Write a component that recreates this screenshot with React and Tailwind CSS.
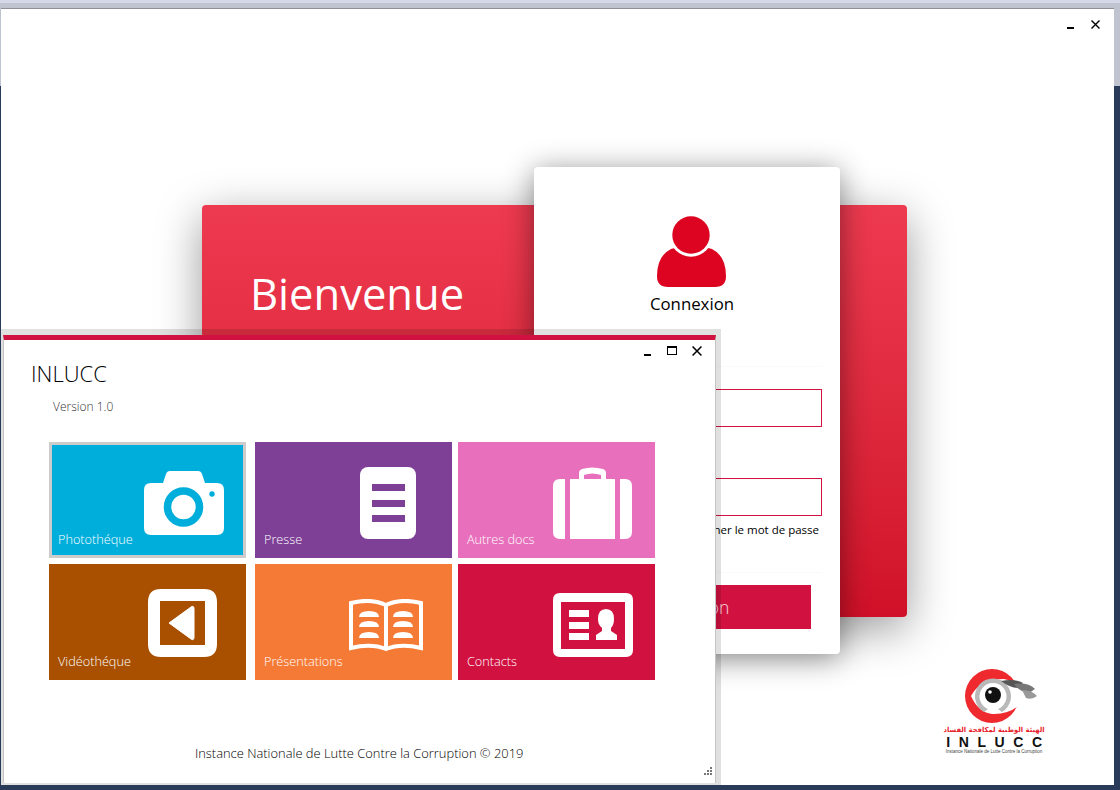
import React from 'react';

const MinIcon = () => <div className="w-[7px] h-[2px] bg-black" />;

const CloseIcon = ({ size = 9 }) => (
  <svg width={size} height={size} viewBox="0 0 9 9" className="block">
    <path d="M0.5 0.5 L8.5 8.5 M8.5 0.5 L0.5 8.5" stroke="#000" strokeWidth="1.4" fill="none" />
  </svg>
);

const CameraIcon = () => (
  <svg width="80" height="64" viewBox="0 0 80 64" className="mt-[29px] mr-[22px]">
    <path d="M7 12 H19 L22 3 Q23 0 26 0 H54 Q57 0 58 3 L61 12 H73 Q80 12 80 19 V57 Q80 64 73 64 H7 Q0 64 0 57 V19 Q0 12 7 12 Z" fill="#fff" />
    <circle cx="39.5" cy="36" r="16" fill="#fff" stroke="#00aedb" strokeWidth="7.5" />
    <circle cx="68" cy="23" r="2.7" fill="#00aedb" />
  </svg>
);

const PresseIcon = () => (
  <svg width="56" height="72" viewBox="0 0 56 72" className="mt-[25px] mr-[36px]">
    <rect width="56" height="72" rx="8" fill="#fff" />
    <rect x="12" y="17" width="33" height="7" fill="#7d4096" />
    <rect x="12" y="33" width="33" height="7" fill="#7d4096" />
    <rect x="12" y="48" width="33" height="7" fill="#7d4096" />
  </svg>
);

const BriefcaseIcon = () => (
  <svg width="79" height="72" viewBox="0 0 79 72" className="mt-[25px] mr-[23px]">
    <path d="M12 12 V72 H7 Q0 72 0 65 V19 Q0 12 7 12 Z" fill="#fff" />
    <path d="M67 12 V72 H72 Q79 72 79 65 V19 Q79 12 72 12 Z" fill="#fff" />
    <path d="M17 12 H26 V6 Q26 3 29 2 Q39 -1 50 2 Q53 3 53 6 V12 H62 V72 H17 Z M31 12 H48 V8 Q39 5 31 8 Z" fill="#fff" fillRule="evenodd" />
  </svg>
);

const VideoIcon = () => (
  <svg width="69" height="68" viewBox="0 0 69 68" className="mt-[25px] mr-[29px]">
    <path d="M13 0 H56 Q69 0 69 13 V55 Q69 68 56 68 H13 Q0 68 0 55 V13 Q0 0 13 0 Z M12 12 V56 H57 V12 Z" fill="#fff" fillRule="evenodd" />
    <path d="M21 34 L43 18 Q46 16 46 20 V48 Q46 52 43 50 Z" fill="#fff" stroke="#fff" strokeWidth="1" strokeLinejoin="round" />
  </svg>
);

const BookIcon = () => (
  <svg width="74" height="53" viewBox="0 0 74 53" className="mt-[35px] mr-[29px]">
    <path d="M2 4 Q22 -1 37 6 Q52 -1 72 4 V49 Q52 44 37 50 Q22 44 2 49 Z M37 6 V50" fill="none" stroke="#fff" strokeWidth="4" />
    <path d="M10 18 Q10 12 20 12 Q30 12 30 18 Z M10 28 Q10 22 20 22 Q30 22 30 28 Z M10 39 Q10 33 20 33 Q30 33 30 39 Z" fill="#fff" />
    <path d="M44 18 Q44 12 54 12 Q64 12 64 18 Z M44 28 Q44 22 54 22 Q64 22 64 28 Z M44 39 Q44 33 54 33 Q64 33 64 39 Z" fill="#fff" />
  </svg>
);

const ContactIcon = () => (
  <svg width="80" height="64" viewBox="0 0 80 64" className="mt-[29px] mr-[22px]">
    <path d="M7 0 H73 Q80 0 80 7 V57 Q80 64 73 64 H7 Q0 64 0 57 V7 Q0 0 7 0 Z M8 9 V56 H72 V9 Z" fill="#fff" fillRule="evenodd" />
    <rect x="16" y="17" width="20" height="7" fill="#fff" />
    <rect x="16" y="29" width="20" height="7" fill="#fff" />
    <rect x="16" y="40" width="20" height="7" fill="#fff" />
    <path d="M53 16 Q61 16 61 26 Q61 32 58 35 V38 L64 42 V47 H43 V42 L49 38 V35 Q45 32 45 26 Q45 16 53 16 Z" fill="#fff" />
  </svg>
);

const tiles = [
  { label: 'Photothéque', bg: 'bg-[#00aedb]', icon: <CameraIcon />, selected: true },
  { label: 'Presse', bg: 'bg-[#7d4096]', icon: <PresseIcon /> },
  { label: 'Autres docs', bg: 'bg-[#e76fbb]', icon: <BriefcaseIcon /> },
  { label: 'Vidéothéque', bg: 'bg-[#a85000]', icon: <VideoIcon /> },
  { label: 'Présentations', bg: 'bg-[#f57a36]', icon: <BookIcon /> },
  { label: 'Contacts', bg: 'bg-[#d11241]', icon: <ContactIcon /> },
];

function Tile({ label, bg, icon, selected }) {
  return (
    <div className={`w-[197px] h-[116px] flex justify-between ${bg} ${selected ? 'shadow-[inset_0_0_0_3px_#cccccc]' : ''}`}>
      <span className="self-end ml-[9px] mb-[10px] text-[12.7px] leading-[18px] font-light text-white whitespace-nowrap">{label}</span>
      {icon}
    </div>
  );
}

function Logo() {
  return (
    <div className="absolute left-[944px] top-[668px] w-[100px] flex flex-col items-center">
      <svg width="100" height="56" viewBox="0 0 100 56" className="block">
        <circle cx="48" cy="28" r="27" fill="#ee2a2e" />
        <path d="M27 28 Q36 11 60 11 Q76 14 84 28 Q70 47 48 46 Q34 44 27 28 Z" fill="#fff" />
        <path d="M40 44 A18 18 0 1 1 58 44 L54 41 A13.5 13.5 0 1 0 44 41 Z" fill="#b9b9b9" />
        <circle cx="49" cy="27" r="8" fill="#111" />
        <circle cx="46" cy="24" r="1.8" fill="#fff" />
        <path d="M57 13 Q70 10 79 15 L75 20 Q66 20 57 13 Z" fill="#555" />
        <path d="M70 16 Q84 14 91 21 L85 25 Q76 24 70 16 Z" fill="#777" />
        <path d="M78 22 Q88 22 93 28 Q88 32 82 30 Z" fill="#999" />
      </svg>
      <div dir="rtl" className="mt-[3px] h-[7px] text-[6.8px] leading-[7px] font-bold text-[#e8202a] whitespace-nowrap font-['DejaVu_Sans',sans-serif]">الهيئة الوطنية لمكافحة الفساد</div>
      <div className="mt-[1px] h-[14px] text-[14px] leading-[14px] font-bold tracking-[8.6px] mr-[-9px] text-[#111] whitespace-nowrap font-['Liberation_Sans',sans-serif]">INLUCC</div>
      <div className="text-[4.5px] leading-[6px] text-[#444] whitespace-nowrap font-['Liberation_Sans',sans-serif]">Instance Nationale de Lutte Contre la Corruption</div>
    </div>
  );
}

function LoginPanel() {
  return (
    <div className="absolute left-[202px] top-[205px] w-[705px] h-[412px] rounded bg-gradient-to-b from-[#ee3a50] to-[#d01028] shadow-[0_12px_45px_rgba(0,0,0,0.4)]">
      <h1 className="ml-[48px] mt-[61px] text-[43.5px] leading-[56px] text-white">Bienvenue</h1>
      {/* Carte de connexion */}
      <div className="absolute left-[332px] top-[-38px] w-[306px] h-[487px] rounded bg-white shadow-[0_4px_30px_rgba(0,0,0,0.45)] flex flex-col items-center">
        <svg width="69" height="71" viewBox="0 0 69 71" className="mt-[49px] ml-[9px]">
          <path d="M14 33 Q22 30 26 35 Q34 41 43 35 Q47 30 55 33 Q69 40 69 60 Q69 71 58 71 H11 Q0 71 0 60 Q0 40 14 33 Z" fill="#dc0420" />
          <circle cx="34" cy="19" r="21.7" fill="#fff" />
          <circle cx="34" cy="19" r="18.7" fill="#dc0420" />
        </svg>
        <div className="mt-[5px] ml-[10px] text-[16.8px] leading-[24px] text-black">Connexion</div>
        <div className="mt-[50px] w-[270px] h-px bg-gray-50" />
        <label className="mt-[6px] w-[270px] h-[16px] text-[12px] text-gray-500">Nom d'utilisateur</label>
        <div className="w-[270px] h-[38px] border border-[#d11241]" />
        <label className="mt-[35px] w-[270px] h-[16px] text-[12px] text-gray-500">Mot de passe</label>
        <div className="w-[270px] h-[38px] border border-[#d11241]" />
        <div className="mt-[6px] w-[270px] pr-[3px] text-right text-[11.5px] leading-[16px] text-black">Afficher le mot de passe</div>
        <div className="mt-[34px] w-[270px] h-px bg-gray-50" />
        <button className="mt-[12px] w-[248px] h-[44px] bg-[#d11241] text-[17.5px] font-light text-white/80">Connexion</button>
      </div>
    </div>
  );
}

function GalleryWindow() {
  return (
    <div className="absolute left-[1px] top-[329px] w-[720px] h-[456px] bg-black/[0.12] pl-[2px] pt-[6px] pr-[5px] pb-[2px]">
      <div className="relative h-full bg-white border-l border-r border-[#c4c4c4] border-t-[5px] border-t-[#d11241] flex flex-col">
        <div className="absolute right-[13px] top-[5px] flex items-center gap-[16px]">
          <div className="mt-[9px]"><MinIcon /></div>
          <div className="w-[10px] h-[9px] border border-black border-t-2" />
          <div className="ml-[-1px]"><CloseIcon size={10} /></div>
        </div>
        <div className="ml-[27px] mt-[17px] text-[22px] leading-[32px] font-light text-black">INLUCC</div>
        <div className="ml-[49px] mt-[9px] text-[12px] leading-[18px] font-light text-[#333]">Version 1.0</div>
        <div className="ml-[45px] mt-[26px] grid grid-cols-[206px_203px_197px] gap-y-[6px]">
          {tiles.map((t) => <Tile key={t.label} {...t} />)}
        </div>
        <div className="mt-[64px] ml-[191px] text-[12.9px] leading-[18px] font-light text-black whitespace-nowrap">Instance Nationale de Lutte Contre la Corruption © 2019</div>
        {/* Poignée de redimensionnement */}
        <svg width="12" height="12" viewBox="0 0 12 12" className="absolute right-[2px] bottom-[4px]" fill="#777">
          <rect x="9" y="0" width="2" height="2" />
          <rect x="6" y="3" width="2" height="2" />
          <rect x="9" y="3" width="2" height="2" />
          <rect x="3" y="6" width="2" height="2" />
          <rect x="6" y="6" width="2" height="2" />
          <rect x="9" y="6" width="2" height="2" />
        </svg>
      </div>
    </div>
  );
}

export default function App() {
  return (
    <div className="relative w-[1120px] h-[790px] overflow-hidden bg-[#2a3a59] font-['Open_Sans',sans-serif]">
      <div className="h-[86px] bg-[#c0c3d0] border-t-[3px] border-[#d5d8e6]" />
      <div className="absolute left-[1px] top-[8px] w-[1113px] h-[777px] bg-white border-t border-[#8e909c] overflow-hidden" />
      <div className="absolute left-[1px] top-[9px] w-[1113px] h-[776px] overflow-hidden">
        <div className="absolute right-[14px] top-[11px] flex items-center gap-[17px]">
          <div className="mt-[7px]"><MinIcon /></div>
          <CloseIcon />
        </div>
        <div className="absolute left-[-1px] top-[-9px] w-[1120px] h-[790px]">
          <LoginPanel />
          <Logo />
          <GalleryWindow />
        </div>
      </div>
    </div>
  );
}
